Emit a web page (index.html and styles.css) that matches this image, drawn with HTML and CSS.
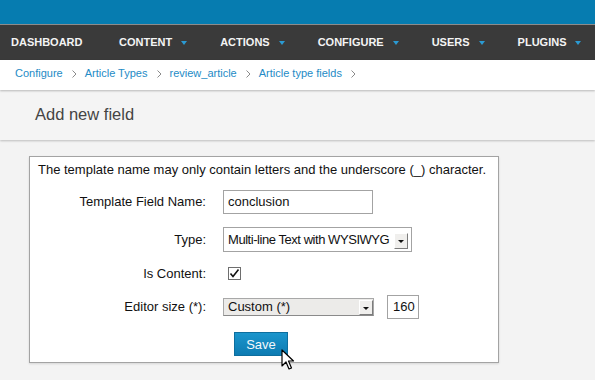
FILE: index.html
```html
<!DOCTYPE html>
<html>
<head>
<meta charset="utf-8">
<link rel="stylesheet" href="styles.css">
</head>
<body>
<div class="topbar"></div>
<nav class="nav">
  <span class="nav-item first">DASHBOARD</span>
  <span class="nav-item">CONTENT<i class="caret"></i></span>
  <span class="nav-item">ACTIONS<i class="caret"></i></span>
  <span class="nav-item">CONFIGURE<i class="caret"></i></span>
  <span class="nav-item">USERS<i class="caret"></i></span>
  <span class="nav-item">PLUGINS<i class="caret"></i></span>
</nav>
<div class="crumbs">
  <a class="crumb">Configure</a><svg class="sep" width="5" height="8" viewBox="0 0 5 8"><path d="M0.5 0.5 L4 4 L0.5 7.5" fill="none" stroke="#8a8a8a" stroke-width="1"/></svg>
  <a class="crumb">Article Types</a><svg class="sep" width="5" height="8" viewBox="0 0 5 8"><path d="M0.5 0.5 L4 4 L0.5 7.5" fill="none" stroke="#8a8a8a" stroke-width="1"/></svg>
  <a class="crumb">review_article</a><svg class="sep" width="5" height="8" viewBox="0 0 5 8"><path d="M0.5 0.5 L4 4 L0.5 7.5" fill="none" stroke="#8a8a8a" stroke-width="1"/></svg>
  <a class="crumb">Article type fields</a><svg class="sep" width="5" height="8" viewBox="0 0 5 8"><path d="M0.5 0.5 L4 4 L0.5 7.5" fill="none" stroke="#8a8a8a" stroke-width="1"/></svg>
</div>
<div class="page-head"><h1 class="title">Add new field</h1></div>
<div class="box">
  <p class="note">The template name may only contain letters and the underscore (_) character.</p>
  <div class="grid">
    <label class="lbl">Template Field Name:</label>
    <div class="ctl"><div class="input name">conclusion</div></div>
    <label class="lbl">Type:</label>
    <div class="ctl"><div class="select type"><span class="sel-text">Multi-line Text with WYSIWYG</span><span class="sel-btn"><i class="sel-arrow"></i></span></div></div>
    <label class="lbl">Is Content:</label>
    <div class="ctl"><svg class="check" width="13" height="13" viewBox="0 0 13 13"><rect x="0.5" y="0.5" width="12" height="12" fill="#fff" stroke="#6e6e6e"/><path d="M2.5 6.5 L5 9.5 L10.5 2.5" fill="none" stroke="#111" stroke-width="1.6"/></svg></div>
    <label class="lbl">Editor size (*):</label>
    <div class="ctl row"><div class="select size"><span class="sel-text">Custom (*)</span><span class="sel-btn"><i class="sel-arrow"></i></span></div><div class="input num">160</div></div>
    <span></span>
    <div class="ctl"><button class="save">Save</button></div>
  </div>
</div>
<svg class="cursor" width="14" height="22" viewBox="0 0 14 22"><path d="M1 1 L1 17 L5 13 L8 20 L10.5 19 L7.5 12 L12.5 12 Z" fill="#fff" stroke="#000" stroke-width="1.2" stroke-linejoin="round"/></svg>
</body>
</html>
```
FILE: styles.css
```css
html, body {
  margin: 0;
  padding: 0;
}
body {
  background: #f3f3f3;
  font-family: "Liberation Sans", Arial, sans-serif;
  color: #111;
  position: relative;
  width: 595px;
  height: 380px;
  overflow: hidden;
}
.topbar {
  height: 24px;
  background: #067cb0;
  border-bottom: 1px solid #8c8c8c;
}
.nav {
  height: 35px;
  background: #3a3a3a;
  display: flex;
  align-items: center;
  padding-bottom: 2px;
  box-sizing: border-box;
}
.nav-item {
  color: #f4f4f4;
  font-weight: bold;
  font-size: 11px;
  padding: 0 16.5px;
  display: flex;
  align-items: center;
  line-height: 14px;
}
.nav-item.first {
  padding-left: 11px;
  padding-right: 20px;
}
.caret {
  display: inline-block;
  width: 0;
  height: 0;
  border-left: 3.5px solid transparent;
  border-right: 3.5px solid transparent;
  border-top: 4px solid #2b9ad2;
  margin-left: 9px;
  margin-top: 2px;
}
.crumbs {
  height: 30px;
  box-sizing: border-box;
  padding-bottom: 4px;
  background: #fff;
  display: flex;
  align-items: center;
  padding-left: 15px;
  box-shadow: 0 1px 2px rgba(0,0,0,0.25);
  position: relative;
  z-index: 2;
}
.crumb {
  color: #248bc6;
  font-size: 11px;
  line-height: 14px;
}
.sep {
  margin: 2px 7.5px 0 9.5px;
}
.page-head {
  height: 50px;
  background: #f4f4f4;
  display: flex;
  align-items: center;
  box-shadow: 0 1px 2px rgba(0,0,0,0.22);
  position: relative;
  z-index: 1;
}
.title {
  margin: 0 0 0 35px;
  font-size: 16.5px;
  font-weight: normal;
  color: #444;
  line-height: 20px;
  padding-bottom: 2px;
}
.box {
  margin: 16px 0 0 29px;
  width: 470px;
  box-sizing: border-box;
  background: #fff;
  border: 1px solid #a3a3a3;
  box-shadow: 0 1px 2px rgba(0,0,0,0.12);
  padding: 5px 0 6px 0;
}
.note {
  margin: 0 0 0 8px;
  font-size: 13px;
  line-height: 16px;
}
.grid {
  margin-top: 12px;
  display: grid;
  grid-template-columns: 176px 1fr;
  grid-template-rows: 24px 25px 17px 24px 24px;
  column-gap: 17px;
  row-gap: 13px;
}
.lbl {
  font-size: 13px;
  text-align: right;
  align-self: center;
  line-height: 16px;
}
.ctl {
  display: flex;
  align-items: center;
}
.input {
  box-sizing: border-box;
  height: 24px;
  border: 1px solid #a3a3a3;
  font-size: 13px;
  line-height: 22px;
  padding-left: 4px;
  background: #fff;
}
.input.name {
  width: 150px;
}
.input.num {
  width: 32px;
  margin-left: 13px;
  padding-left: 5px;
}
.select {
  box-sizing: border-box;
  border: 1px solid #a3a3a3;
  display: flex;
  align-items: center;
  font-size: 13px;
  position: relative;
  white-space: nowrap;
}
.select.type {
  width: 189px;
  height: 25px;
  background: #fff;
  padding-left: 4px;
}
.select.type .sel-text {
  letter-spacing: -0.45px;
}
.select.size {
  width: 151px;
  height: 18px;
  background: #ecebe9;
  padding-left: 4px;
  border-color: #a8a8a8;
  border-bottom-color: #8a8a8a;
}
.sel-text {
  flex: 1;
  line-height: 16px;
}
.sel-btn {
  box-sizing: border-box;
  flex: none;
  width: 14px;
  height: 16px;
  background: #f0efed;
  border-top: 1px solid #fff;
  border-left: 1px solid #fff;
  border-right: 1px solid #7c7c7c;
  border-bottom: 1px solid #7c7c7c;
  display: flex;
  align-items: center;
  justify-content: center;
  margin-right: 2px;
}
.select.type .sel-btn {
  height: 16px;
  margin-top: 2px;
  margin-right: 3px;
}
.select.size .sel-btn {
  height: 15px;
  margin-right: 0;
}
.sel-arrow {
  display: block;
  width: 0;
  height: 0;
  border-left: 3px solid transparent;
  border-right: 3px solid transparent;
  border-top: 3px solid #111;
  margin-top: 2px;
}
.check {
  margin-left: 5px;
}
.save {
  margin-left: 11px;
  width: 54px;
  height: 24px;
  border: 1px solid #0d6e9e;
  background: linear-gradient(#1b95cc, #0d7bb2);
  color: #f4f8fb;
  font-family: "Liberation Sans", Arial, sans-serif;
  font-size: 13px;
  padding: 0;
}
.cursor {
  position: absolute;
  left: 281px;
  top: 349px;
}
```
